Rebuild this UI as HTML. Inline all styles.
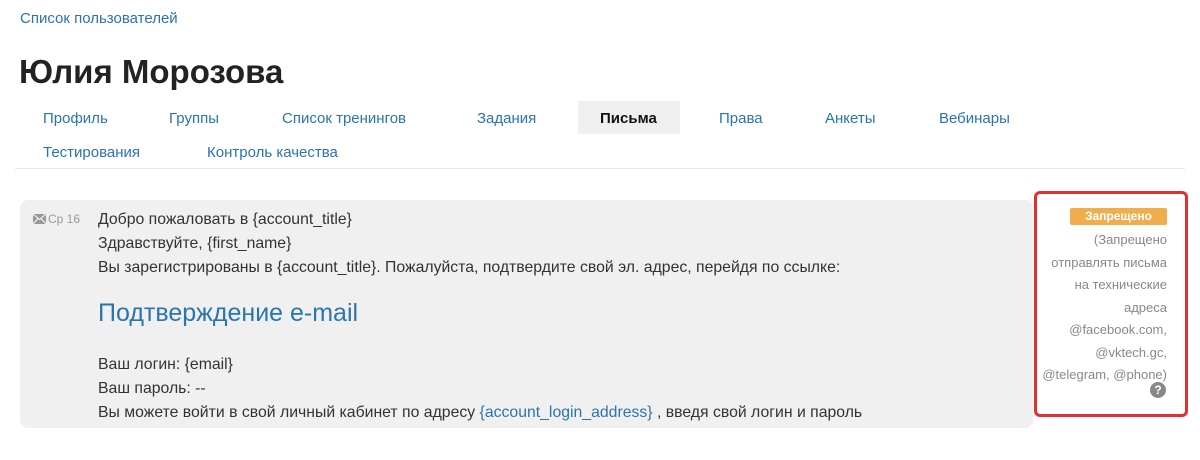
<!DOCTYPE html>
<html><head><meta charset="utf-8"><style>
body{margin:0;width:1200px;height:460px;background:#fff;font-family:"Liberation Sans","DejaVu Sans",sans-serif;position:relative;overflow:hidden}
.a{position:absolute;white-space:nowrap}
.tab{font-size:15px;color:#2a74b0;top:110px}
.t2{top:144px}
.body{font-size:15.8px;color:#333;line-height:24px}
.gr{font-size:13px;color:#888;line-height:22.5px;text-align:right}
</style></head><body>
<div class="a" style="left:20px;top:10px;font-size:15px;color:#2a74b0">Список пользователей</div>
<div class="a" style="left:19px;top:53px;font-size:33px;font-weight:bold;color:#222">Юлия Морозова</div>
<div class="a" style="left:578px;top:101px;width:102px;height:33px;background:#efefef"></div>
<div class="a tab" style="left:43px">Профиль</div>
<div class="a tab" style="left:169px">Группы</div>
<div class="a tab" style="left:282px">Список тренингов</div>
<div class="a tab" style="left:477px">Задания</div>
<div class="a tab" style="left:600px;color:#111;font-weight:bold">Письма</div>
<div class="a tab" style="left:719px">Права</div>
<div class="a tab" style="left:825px">Анкеты</div>
<div class="a tab" style="left:939px">Вебинары</div>
<div class="a tab t2" style="left:43px">Тестирования</div>
<div class="a tab t2" style="left:207px">Контроль качества</div>
<div class="a" style="left:15px;top:168px;width:1170px;height:1px;background:#e8e8e8"></div>
<div class="a" style="left:20px;top:200px;width:1013px;height:228px;background:#f0f0f0;border-radius:8px"></div>
<svg class="a" style="left:33px;top:214px" width="13" height="10" viewBox="0 0 13 10"><rect width="13" height="10" fill="#999"/><path d="M0 0L6.5 5.5L13 0M0 10L5 4.5M13 10L8 4.5" stroke="#f0f0f0" stroke-width="1.2" fill="none"/></svg>
<div class="a" style="left:48px;top:212px;font-size:12px;color:#999">Ср 16</div>
<div class="a body" style="left:98px;top:208px">Добро пожаловать в {account_title}<br>Здравствуйте, {first_name}<br>Вы зарегистрированы в {account_title}. Пожалуйста, подтвердите свой эл. адрес, перейдя по ссылке:</div>
<div class="a" style="left:98px;top:299px;font-size:25px;color:#2a74b0">Подтверждение e-mail</div>
<div class="a body" style="left:98px;top:353px">Ваш логин: {email}<br>Ваш пароль: --<br>Вы можете войти в свой личный кабинет по адресу <span style="color:#2a74b0">{account_login_address}</span> , введя свой логин и пароль</div>
<div class="a" style="left:1034px;top:191px;width:148px;height:220px;border:3px solid #e03030;border-radius:6px"></div>
<div class="a" style="left:1070px;top:208px;width:97px;height:17px;background:#f0ad4e;border-radius:2px;color:#fff;font-size:12px;font-weight:bold;text-align:center;line-height:17px">Запрещено</div>
<div class="a gr" style="right:33px;top:229px">(Запрещено<br>отправлять письма<br>на технические<br>адреса<br>@facebook.com,<br>@vktech.gc,<br>@telegram, @phone)</div>
<div class="a" style="left:1150px;top:382px;width:16px;height:16px;border-radius:50%;background:#888;color:#fff;font-size:12px;font-weight:bold;text-align:center;line-height:16px">?</div>
</body></html>
